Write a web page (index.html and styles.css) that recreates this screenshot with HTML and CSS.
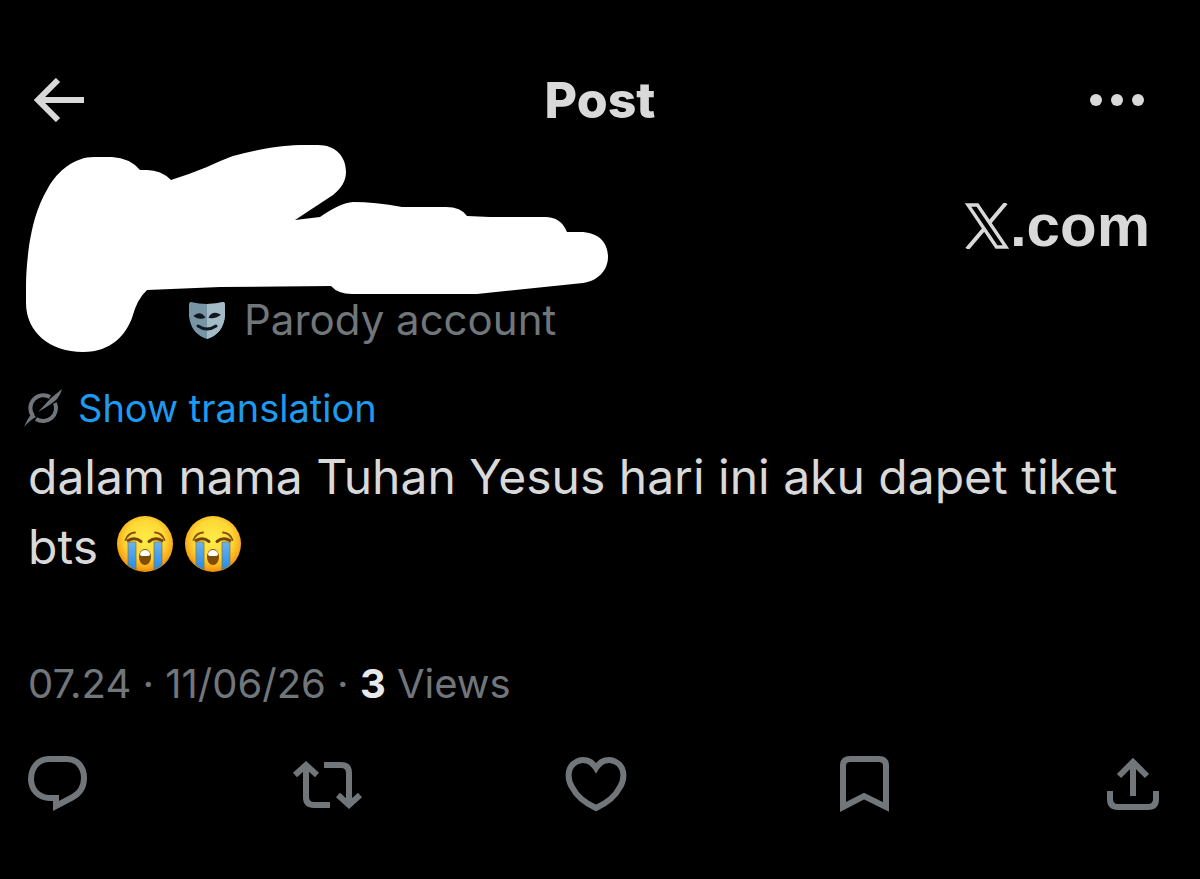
FILE: index.html
```html
<!DOCTYPE html>
<html lang="id">
<head>
  <meta charset="UTF-8" />
  <meta name="viewport" content="width=device-width, initial-scale=1" />
  <title>Post</title>
  <link rel="stylesheet" href="styles.css">
</head>
<body>

  <!-- shared shapes for the crying emoji -->
  <svg class="defs" aria-hidden="true">
    <defs>
      <radialGradient id="face" cx="50%" cy="42%" r="58%">
        <stop offset="0" stop-color="#ffec4a" />
        <stop offset="0.6" stop-color="#fdd835" />
        <stop offset="0.85" stop-color="#f9ac1c" />
        <stop offset="1" stop-color="#e88b0c" />
      </radialGradient>
      <linearGradient id="tear" x1="0" y1="0" x2="0" y2="1">
        <stop offset="0" stop-color="#6bb3ef" />
        <stop offset="1" stop-color="#248be8" />
      </linearGradient>
      <symbol id="sob" viewBox="0 0 56 56">
        <circle cx="28" cy="28" r="28" fill="url(#face)" />
        <path d="M11 26h8v28q-4-2-8-5zM37 26h8v23q-4 3-8 5z" fill="url(#tear)" stroke="#8a7a35" stroke-width="0.8" />
        <path d="M8.500 24Q11 17 18 16.500M47.500 24Q45 17 38 16.500" fill="none" stroke="#84500a" stroke-width="1.800" stroke-linecap="round" />
        <path d="M11 24.500Q18 20.500 24 25.500M45 24.500Q38 20.500 32 25.500" fill="none" stroke="#744307" stroke-width="3" stroke-linecap="round" />
        <ellipse cx="28" cy="41" rx="6" ry="8" fill="#804c08" />
        <path d="M23 38Q24 34 28 34t5 4q0 2-2 2h-6q-2 0-2-2z" fill="#fff" />
      </symbol>
    </defs>
  </svg>

  <header class="top-bar">
    <button class="icon-btn" aria-label="Back">
      <svg width="50" height="44" viewBox="0 0 50 44" fill="none" stroke="currentColor" stroke-width="6"><path d="M24 2L4 22l20 20M4 22h46" /></svg>
    </button>
    <h1>Post</h1>
    <button class="icon-btn more" aria-label="More">
      <svg width="54" height="12" viewBox="0 0 54 12" fill="currentColor"><circle cx="6" cy="6" r="6" /><circle cx="27" cy="6" r="6" /><circle cx="48" cy="6" r="6" /></svg>
    </button>
  </header>

  <main>
    <section class="author">
      <svg class="scribble" width="600" height="220" viewBox="20 140 600 220" fill="#fff" aria-hidden="true">
        <path d="M140 170Q130 158 112 157H96C76 156 58 170 48 188C36 208 32 228 29 246Q26 270 26 285V303C26 332 50 352 83 352C112 352 126 334 132 318Q137 299 147 290L220 287L331 286Q338 294 352 294H477L583 283C598 281 608 270 608 257C608 242 598 232 580 232H567Q561 217 545 217H490L467 216Q461 207 446 207H402Q375 202 353 202Q340 203 320 217L295 220L333 195C342 188 346 180 346 172C346 156 335 145 318 145H300C275 146 256 150 233 156Q222 160 207 167Q190 174 171 180Q161 170 147 170Z" />
      </svg>
      <div class="brand">
        <svg width="46" height="46" viewBox="0 0 46 46" fill="none" stroke="currentColor" aria-label="X" role="img">
          <path d="M4 2h9.500L42 44h-9.500z" stroke-width="3.400" />
          <path d="M42 0L26 19M20 26L3 46" stroke-width="4" />
        </svg>
        <span>.com</span>
      </div>
      <p class="label">
        <svg width="38" height="38" viewBox="0 0 38 38" aria-hidden="true">
          <path d="M3 1Q19 5 35 1Q37 1 37 4V15Q35 33 19 38Q3 33 1 15V4Q1 1 3 1z" fill="#7895a6" />
          <path d="M19 3Q28 3 35 1Q37 1 37 4V15Q35 33 19 38z" fill="#a3bac7" />
          <path d="M7 15q5-4 9 1q-5 2-9-1zM31 14q-6-3-9 2q5 1 9-2z" fill="#101820" stroke="#101820" stroke-width="2" />
          <path d="M10 25q9 6 18 0" fill="none" stroke="#101820" stroke-width="3" stroke-linecap="round" />
        </svg>
        Parody account
      </p>
    </section>

    <a class="translate" href="#">
      <svg width="38" height="38" viewBox="0 0 38 38" fill="none" stroke="#71767b" stroke-width="4" aria-hidden="true">
        <path d="M26 8A13 13 0 0 0 9 27M31 14A13 13 0 0 1 12 30" />
        <path d="M38 0L27 9L14 23Q28 15 33 10Q37 5 38 0zM0 38Q4 29 8 24L12 28Q6 31 0 38z" fill="#71767b" stroke="none" />
      </svg>
      Show translation
    </a>

    <p class="post-text">dalam nama Tuhan Yesus hari ini aku dapet tiket bts <span class="emoji"><svg role="img" aria-label="😭"><use href="#sob" /></svg><svg role="img" aria-label="😭"><use href="#sob" /></svg></span></p>

    <p class="meta">07.24 · 11/06/26 · <strong>3</strong> Views</p>

    <div class="actions">
      <button class="icon-btn" aria-label="Reply">
        <svg viewBox="0 0 68 60" fill="none" stroke="currentColor" stroke-width="6"><path d="M25 5H43C54 5 60 14 60 24C60 33 56 39 49 43L32 52V44H26C14 44 7 35 7 25C7 14 14 5 25 5z" /></svg>
      </button>
      <button class="icon-btn" aria-label="Repost">
        <svg viewBox="0 0 68 60" fill="none" stroke="currentColor" stroke-width="6"><path d="M2 21L13 11L24 21M13 12V43Q13 51 21 51H37M31 11H48Q56 11 56 19V50M45 41L56 51L67 41" /></svg>
      </button>
      <button class="icon-btn" aria-label="Like">
        <svg viewBox="0 0 68 60" fill="none" stroke="currentColor" stroke-width="6"><path d="M34 14C29 6 21 4 14 8C5 13 5 25 10 33C14 41 23 49 34 54C45 49 54 41 58 33C63 25 63 13 54 8C47 4 39 6 34 14z" /></svg>
      </button>
      <button class="icon-btn" aria-label="Bookmark">
        <svg viewBox="0 0 68 60" fill="none" stroke="currentColor" stroke-width="6"><path d="M13 53V12Q13 5 20 5H49Q56 5 56 12V53L34 42z" /></svg>
      </button>
      <button class="icon-btn" aria-label="Share">
        <svg viewBox="0 0 68 60" fill="none" stroke="currentColor" stroke-width="6"><path d="M20 22L34 8L48 22M34 9V42M11 37V45Q11 53 19 53H49Q57 53 57 45V37" /></svg>
      </button>
    </div>
  </main>

</body>
</html>
```
FILE: styles.css
```css
* {
  box-sizing: border-box;
  margin: 0;
  padding: 0;
}

body {
  min-height: 100vh;
  font-family: Inter, "Noto Sans", sans-serif;
  background: #000;
  color: #d9d9d9;
}

.defs {
  position: absolute;
  width: 0;
  height: 0;
}

svg {
  display: block;
  flex-shrink: 0;
}

.icon-btn {
  border: none;
  background: transparent;
  color: inherit;
  cursor: pointer;
}

.top-bar {
  display: grid;
  grid-template-columns: 1fr auto 1fr;
  justify-items: start;
  align-items: center;
  padding: 70px 34px 10px;
}

.top-bar h1 {
  font-size: 50px;
  line-height: 60px;
  font-weight: 800;
}

.more {
  justify-self: end;
  padding-right: 22px;
}

main {
  padding: 0 28px;
}

.author {
  position: relative;
  display: flex;
  flex-direction: column;
  justify-content: space-between;
  height: 210px;
  padding: 56px 22px 0 160px;
}

/* hides the avatar and the account name */
.scribble {
  position: absolute;
  top: 0;
  left: -8px;
}

.brand {
  display: flex;
  align-items: center;
  align-self: flex-end;
  font-family: "Liberation Sans", Arial, sans-serif;
  font-size: 60px;
  line-height: 60px;
  font-weight: bold;
}

.label {
  display: flex;
  align-items: center;
  gap: 18px;
  color: #71767b;
  font-size: 42px;
  line-height: 60px;
}

.translate {
  display: flex;
  align-items: center;
  gap: 16px;
  margin: 28px 0 0 -4px;
  color: #1d9bf0;
  font-size: 38px;
  line-height: 60px;
  text-decoration: none;
}

.post-text {
  margin-top: 4px;
  font-size: 48px;
  line-height: 70px;
}

.emoji {
  display: inline-flex;
  gap: 12px;
  margin-left: 6px;
  vertical-align: -8px;
}

.emoji svg {
  width: 56px;
  height: 56px;
}

.meta {
  margin-top: 72px;
  color: #71767b;
  font-size: 40px;
  line-height: 60px;
}

.meta strong {
  color: #e7e9ea;
}

.actions {
  display: flex;
  justify-content: space-between;
  margin: 40px 5px 32px -4px;
  color: #71767b;
}

.actions svg {
  width: 68px;
  height: 60px;
  overflow: visible;
}
```
